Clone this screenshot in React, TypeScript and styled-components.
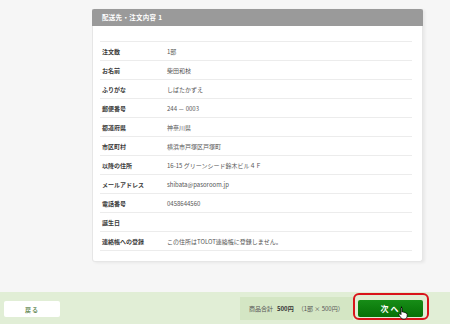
import styled, { createGlobalStyle } from "styled-components";

const Global = createGlobalStyle`
  html, body {
    margin: 0;
    padding: 0;
    background: #f6f6f6;
  }
  body {
    font-family: "Noto Sans CJK JP", "Noto Sans", sans-serif;
  }
`;

const Page = styled.div`
  width: 450px;
  height: 324px;
  display: flex;
  flex-direction: column;
  overflow: hidden;
`;

const Main = styled.div`
  flex: 1;
  padding: 9px 0 0 92px;
`;

const Card = styled.div`
  width: 331px;
  height: 253px;
  box-sizing: border-box;
  background: #fff;
  border: 1px solid #e6e6e6;
  border-top: none;
  border-radius: 0 0 3px 3px;
  box-shadow: 2px 1px 3px rgba(0, 0, 0, 0.06);
`;

const CardHeader = styled.div`
  height: 17px;
  background: #9a9a9a;
  color: #fff;
  font-size: 6.5px;
  font-weight: 700;
  line-height: 17px;
  padding-left: 10px;
  margin: 0 -1px;
  border-radius: 2px 2px 0 0;
  letter-spacing: 0.3px;
`;

const List = styled.div`
  margin: 15px 10px 0 7px;
  border-top: 1px solid #ececec;
`;

const Row = styled.div`
  height: 18px;
  display: flex;
  align-items: center;
  border-bottom: 1px solid #ececec;
  font-size: 6px;
`;

const Label = styled.div`
  width: 65px;
  padding-left: 2px;
  color: #3a3a3a;
  font-weight: 700;
`;

const Value = styled.div`
  color: #555;
`;

const Footer = styled.div`
  height: 32px;
  background: #e1eed6;
  display: flex;
  align-items: center;
  padding: 0 27px 0 4px;
`;

const BackButton = styled.div`
  width: 56px;
  height: 16px;
  background: #fff;
  border-radius: 2px;
  color: #6d8f5e;
  font-size: 6px;
  font-weight: 700;
  display: flex;
  align-items: center;
  justify-content: center;
  margin-top: 2px;
  letter-spacing: 1px;
`;

const Spacer = styled.div`
  flex: 1;
`;

const Total = styled.div`
  width: 113px;
  height: 23px;
  box-sizing: border-box;
  background: #d4e6c4;
  display: flex;
  align-items: center;
  padding-left: 9px;
  font-size: 6px;
  color: #555;
  gap: 4px;
  white-space: nowrap;
`;

const Strong = styled.span`
  font-weight: 700;
  color: #333;
`;

const NextWrap = styled.div`
  position: relative;
  margin-left: 5px;
`;

const NextButton = styled.div`
  width: 65px;
  height: 17px;
  background: linear-gradient(#178d17, #067006);
  border-radius: 2px;
  color: #fff;
  font-size: 8px;
  font-weight: 700;
  display: flex;
  align-items: center;
  justify-content: center;
  letter-spacing: 2px;
`;

const Highlight = styled.div`
  position: absolute;
  left: -5px;
  top: -7px;
  right: -6px;
  bottom: -3px;
  border: 2px solid #d9141b;
  border-radius: 6px;
`;

const Cursor = styled.svg`
  position: absolute;
  left: 40px;
  top: 6px;
`;

const rows: [string, string][] = [
  ["注文数", "1部"],
  ["お名前", "柴田和枝"],
  ["ふりがな", "しばたかずえ"],
  ["郵便番号", "244 － 0003"],
  ["都道府県", "神奈川県"],
  ["市区町村", "横浜市戸塚区戸塚町"],
  ["以降の住所", "16-15 グリーンシード鈴木ビル４Ｆ"],
  ["メールアドレス", "shibata@pasoroom.jp"],
  ["電話番号", "0458644560"],
  ["誕生日", ""],
  ["連絡帳への登録", "この住所はTOLOT連絡帳に登録しません。"],
];

const App = () => {
  return (
    <Page>
      <Global />
      <Main>
        <Card>
          <CardHeader>配送先・注文内容 1</CardHeader>
          <List>
            {rows.map(([label, value]) => (
              <Row key={label}>
                <Label>{label}</Label>
                <Value>{value}</Value>
              </Row>
            ))}
          </List>
        </Card>
      </Main>
      <Footer>
        <BackButton>戻る</BackButton>
        <Spacer />
        <Total>
          <span>商品合計</span>
          <Strong>500円</Strong>
          <span>（1部 × 500円）</span>
        </Total>
        <NextWrap>
          <NextButton>次へ</NextButton>
          <Highlight />
          <Cursor width="11" height="14" viewBox="0 0 11 14">
            <path
              d="M3 1.2c.6 0 1 .4 1 1V6l.4-.2c.5-.2 1 .1 1.2.5.5-.3 1.1-.1 1.3.4.5-.2 1.1.1 1.2.6.6-.1 1.1.3 1.1.9V10c0 1.7-1.2 3-2.9 3H5.1c-.9 0-1.6-.4-2.1-1.1L1 9.2c-.3-.5-.2-1 .3-1.3.4-.3 1-.2 1.3.2l.4.5V2.2c0-.6.4-1 1-1z"
              fill="#fff"
              stroke="#000"
              strokeWidth="0.8"
            />
          </Cursor>
        </NextWrap>
      </Footer>
    </Page>
  );
};

export default App;
